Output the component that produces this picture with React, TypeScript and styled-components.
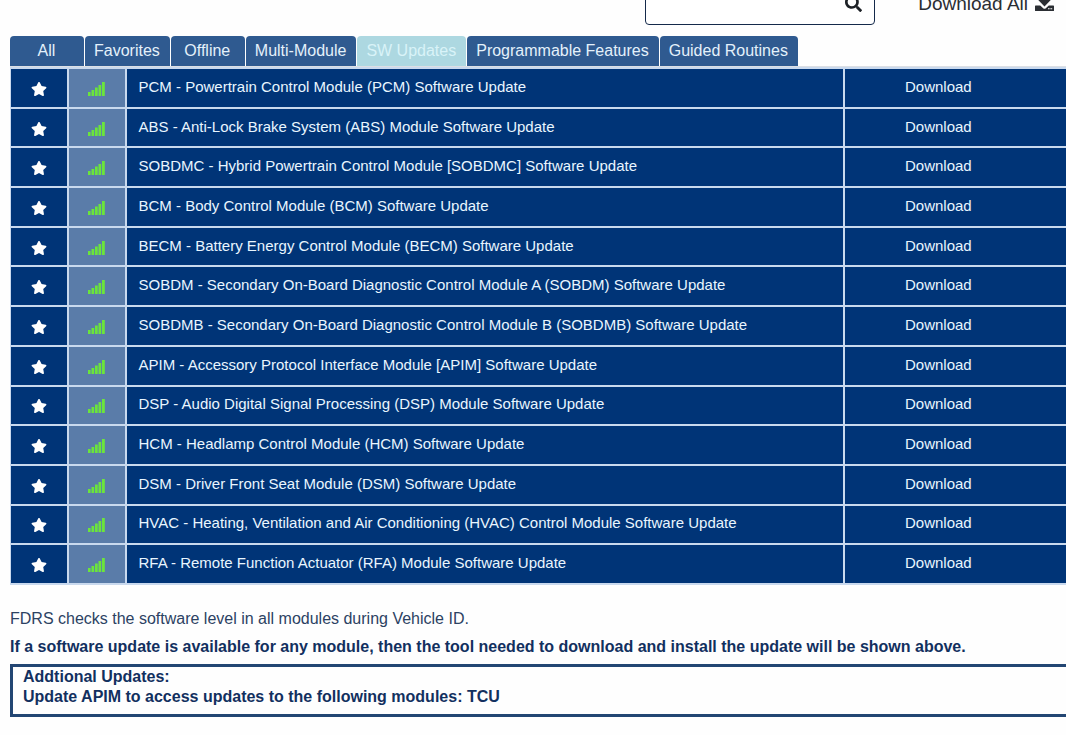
import React, { useState } from "react";
import styled, { createGlobalStyle } from "styled-components";
import { FaSearch, FaStar } from "react-icons/fa";

const GlobalStyle = createGlobalStyle`
  *, *::before, *::after { box-sizing: border-box; }
  body {
    margin: 0;
    background: #fefefe;
    color: #1c2f52;
    font-family: "Liberation Sans", Arial, sans-serif;
    font-size: 16px;
    overflow-x: hidden;
  }
  button, input { font: inherit; }
`;

const Page = styled.main`
  padding-left: 10px;
`;

const Toolbar = styled.div`
  display: flex;
  justify-content: flex-end;
  align-items: center;
  gap: 43px;
  margin-top: -20px;
  padding-right: 12px;
`;

const SearchBox = styled.div`
  display: flex;
  align-items: center;
  width: 230px;
  height: 45px;
  padding: 0 12px;
  border: 1px solid #14294a;
  border-radius: 4px;
  background: #fff;
`;

const SearchInput = styled.input`
  flex: 1;
  min-width: 0;
  border: 0;
  outline: 0;
  background: transparent;
`;

const PlainButton = styled.button`
  display: inline-flex;
  align-items: center;
  padding: 0;
  border: 0;
  background: transparent;
  color: inherit;
  cursor: pointer;
`;

const SearchButton = styled(PlainButton)`
  padding-top: 1px;
  color: #1d2126;
  font-size: 17px;
`;

const DownloadAll = styled(PlainButton)`
  align-items: flex-start;
  gap: 7px;
  padding-top: 2px;
  color: #2b2e33;
  font-size: 19px;
  line-height: 24px;
`;

const Tabs = styled.div`
  display: flex;
  gap: 1px;
  margin-top: 11px;
  border-bottom: 1px solid #dcdfe4;
`;

const Tab = styled.button<{ $active: boolean }>`
  min-width: 74px;
  height: 30px;
  padding: 0 10px 0 9px;
  border: 0;
  border-radius: 4px 4px 0 0;
  background: ${(p) => (p.$active ? "#add8e1" : "#2f5a90")};
  color: ${(p) => (p.$active ? "#d9f3f8" : "#e4f1fb")};
  line-height: 24px;
  white-space: nowrap;
  cursor: pointer;
`;

const Modules = styled.table`
  width: 100%;
  height: 518px;
  border-collapse: collapse;
  table-layout: fixed;
  font-size: 15px;
  line-height: 20px;
`;

const IconColumn = styled.col`
  width: 57px;
`;

const SignalColumn = styled.col`
  width: 58px;
`;

const ActionColumn = styled.col`
  width: 222px;
`;

const Cell = styled.td<{ $tone?: "signal" }>`
  padding: 0 0 2px 12px;
  border: 2px solid #c9d9ee;
  background: ${(p) => (p.$tone === "signal" ? "#5a7ca9" : "#003477")};
  color: #e9f6ff;
  white-space: nowrap;

  &:first-child { border-left-width: 1px; }
  &:last-child { border-right: 0; }
`;

const IconCell = styled(Cell)`
  padding: 2px 0 0;
  text-align: center;
  color: ${(p) => (p.$tone === "signal" ? "#6be53b" : "#fff")};
  font-size: 16px;
  line-height: 0;
`;

const ActionCell = styled(Cell)`
  padding-left: 60px;
`;

const Notes = styled.section`
  padding-top: 24px;
  line-height: 20px;
`;

const Note = styled.p<{ $strong?: boolean }>`
  margin: 0 0 ${(p) => (p.$strong ? 7 : 8)}px;
  color: ${(p) => (p.$strong ? "#12305f" : "#2c4263")};
  font-weight: ${(p) => (p.$strong ? 700 : 400)};
`;

const UpdatesBox = styled.aside`
  padding: 0 10px 7px;
  border: 3px solid #234673;
  border-right: 0;
  color: #12305f;
  font-weight: 700;
`;

const Line = styled.p`
  margin: 0;
`;

function SignalIcon() {
  return (
    <svg width="17" height="14" viewBox="0 0 17 14" fill="currentColor" aria-hidden="true">
      <rect x="0" y="10" width="2.6" height="4" />
      <rect x="3.5" y="8" width="2.7" height="6" />
      <rect x="7" y="5.5" width="2.7" height="8.5" />
      <rect x="10.5" y="3" width="2.7" height="11" />
      <rect x="14" y="0" width="2.8" height="14" />
    </svg>
  );
}

function DownloadIcon() {
  return (
    <svg width="19" height="19" viewBox="0 0 19 19" aria-hidden="true">
      <path
        fill="currentColor"
        d="M.6 13.6h4.6l3 2.7q1.3 1 2.6 0l3-2.7h4.6q.6 0 .6.6v4.2q0 .6-.6.6H.6q-.6 0-.6-.6v-4.2q0-.6.6-.6z"
      />
      <path fill="currentColor" d="M6.7 0h5.6v7.2h4.2l-7 7.4-7-7.4h4.2z" />
      <path fill="#fefefe" d="M13 16.3h1.6v1H13zM15.4 16.3h1.8v1h-1.8z" />
    </svg>
  );
}

const tabs = [
  "All",
  "Favorites",
  "Offline",
  "Multi-Module",
  "SW Updates",
  "Programmable Features",
  "Guided Routines",
];

const modules = [
  "PCM - Powertrain Control Module (PCM) Software Update",
  "ABS - Anti-Lock Brake System (ABS) Module Software Update",
  "SOBDMC - Hybrid Powertrain Control Module [SOBDMC] Software Update",
  "BCM - Body Control Module (BCM) Software Update",
  "BECM - Battery Energy Control Module (BECM) Software Update",
  "SOBDM - Secondary On-Board Diagnostic Control Module A (SOBDM) Software Update",
  "SOBDMB - Secondary On-Board Diagnostic Control Module B (SOBDMB) Software Update",
  "APIM - Accessory Protocol Interface Module [APIM] Software Update",
  "DSP - Audio Digital Signal Processing (DSP) Module Software Update",
  "HCM - Headlamp Control Module (HCM) Software Update",
  "DSM - Driver Front Seat Module (DSM) Software Update",
  "HVAC - Heating, Ventilation and Air Conditioning (HVAC) Control Module Software Update",
  "RFA - Remote Function Actuator (RFA) Module Software Update",
];

export default function App() {
  const [active, setActive] = useState("SW Updates");

  return (
    <>
      <GlobalStyle />
      <Page>
        <Toolbar>
          <SearchBox>
            <SearchInput type="text" aria-label="Search" />
            <SearchButton type="button" aria-label="Search">
              <FaSearch />
            </SearchButton>
          </SearchBox>
          <DownloadAll type="button">
            Download All <DownloadIcon />
          </DownloadAll>
        </Toolbar>

        <Tabs role="tablist">
          {tabs.map((name) => (
            <Tab
              key={name}
              type="button"
              role="tab"
              aria-selected={name === active}
              $active={name === active}
              onClick={() => setActive(name)}
            >
              {name}
            </Tab>
          ))}
        </Tabs>

        <Modules>
          <colgroup>
            <IconColumn />
            <SignalColumn />
            <col />
            <ActionColumn />
          </colgroup>
          <tbody>
            {modules.map((name) => (
              <tr key={name}>
                <IconCell>
                  <PlainButton type="button" aria-label="Favorite">
                    <FaStar />
                  </PlainButton>
                </IconCell>
                <IconCell $tone="signal">
                  <SignalIcon />
                </IconCell>
                <Cell>{name}</Cell>
                <ActionCell>
                  <PlainButton type="button">Download</PlainButton>
                </ActionCell>
              </tr>
            ))}
          </tbody>
        </Modules>

        <Notes>
          <Note>FDRS checks the software level in all modules during Vehicle ID.</Note>
          <Note $strong>
            If a software update is available for any module, then the tool needed to download and
            install the update will be shown above.
          </Note>
          <UpdatesBox>
            <Line>Addtional Updates:</Line>
            <Line>Update APIM to access updates to the following modules: TCU</Line>
          </UpdatesBox>
        </Notes>
      </Page>
    </>
  );
}
